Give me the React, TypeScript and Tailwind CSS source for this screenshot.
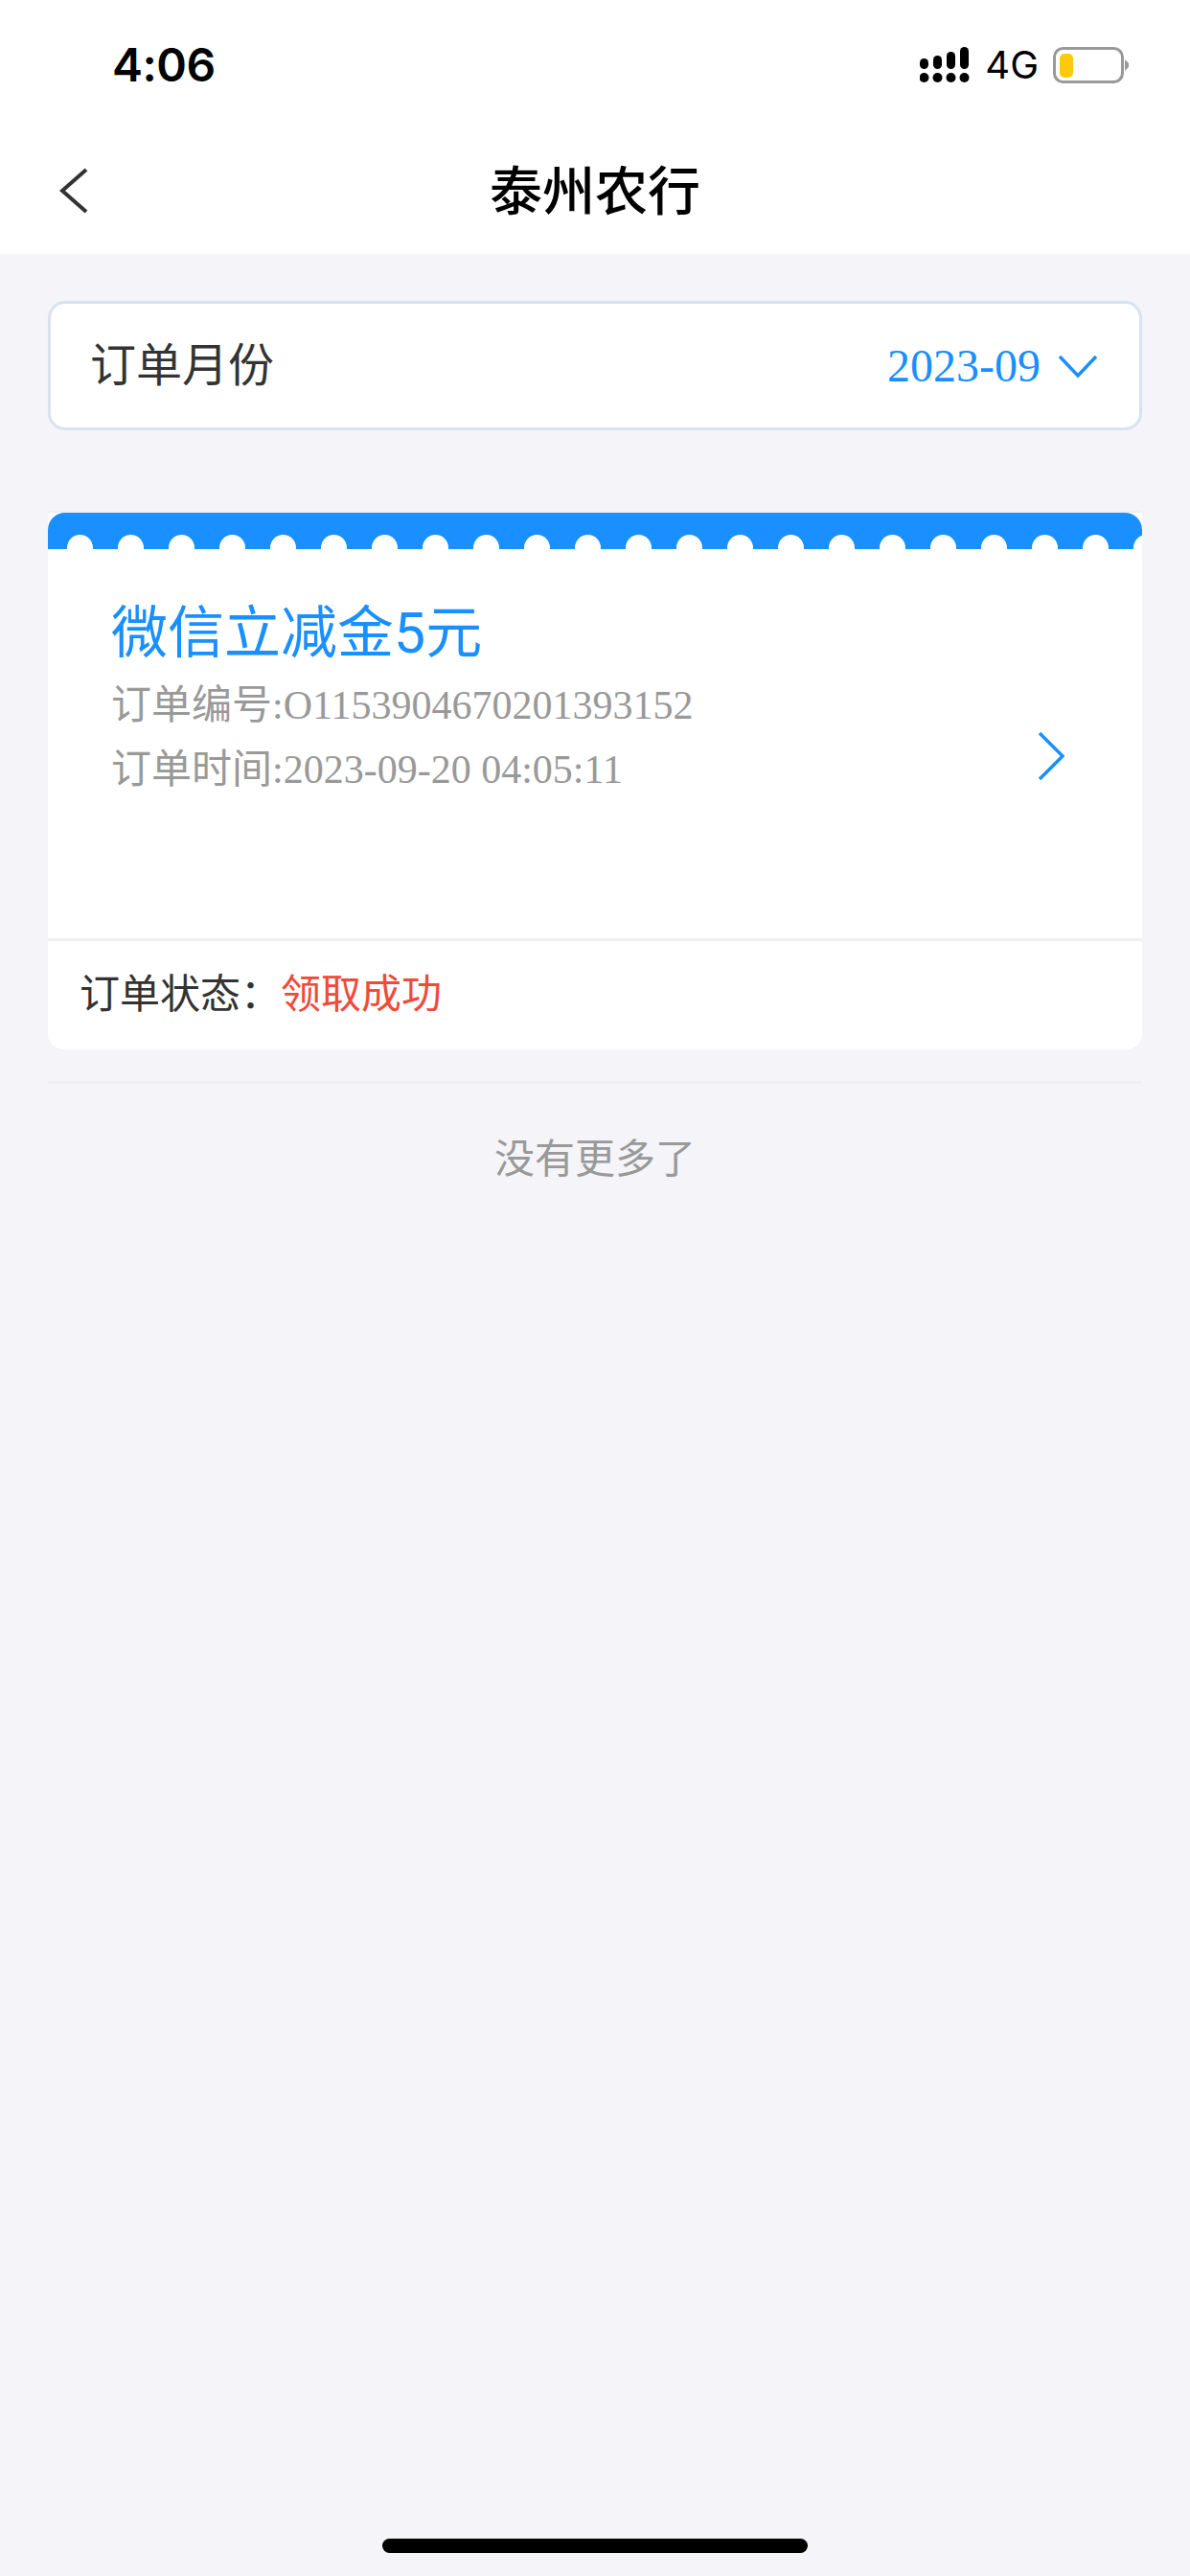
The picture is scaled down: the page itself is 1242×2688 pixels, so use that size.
import React from 'react';

const cjk = "font-['Noto_Sans_CJK_SC',sans-serif]";
const serifCjk = "font-['Liberation_Serif','Noto_Sans_CJK_SC',serif]";

const dots = Array.from({ length: 22 }, (_, i) => i);

const SignalIcon = () => (
  <svg width="52" height="38" viewBox="0 0 52 38" className="block">
    <rect x="0" y="12" width="9" height="11" rx="4.5" fill="#000" />
    <rect x="14" y="9" width="9" height="14" rx="4.5" fill="#000" />
    <rect x="28" y="5" width="9" height="18" rx="4.5" fill="#000" />
    <rect x="42" y="0" width="9" height="23" rx="4.5" fill="#000" />
    <circle cx="4.5" cy="32" r="5" fill="#000" />
    <circle cx="18.5" cy="32" r="5" fill="#000" />
    <circle cx="32.5" cy="32" r="5" fill="#000" />
    <circle cx="46.5" cy="32" r="5" fill="#000" />
  </svg>
);

const BatteryIcon = () => (
  <svg width="80" height="38" viewBox="0 0 80 38" className="block">
    <rect x="1.5" y="1.5" width="71" height="35" rx="9" fill="#fff" stroke="#999" strokeWidth="3" />
    <rect x="7" y="7" width="14" height="25" rx="5" fill="#fdc90a" />
    <path d="M75 13 L79 17 V21 L75 25 Z" fill="#999" />
  </svg>
);

const StatusBar = () => (
  <div className="flex h-[133px] items-start justify-between pl-[117px] pr-[63px] pt-[49px]">
    <span className="font-['Inter',sans-serif] text-[48px] leading-[38px] font-semibold tracking-[-0.5px] text-black">4:06</span>
    <div className="flex items-center">
      <SignalIcon />
      <span className="ml-[16px] mr-[15px] font-['Inter',sans-serif] text-[40px] leading-[38px] text-black">4G</span>
      <BatteryIcon />
    </div>
  </div>
);

const NavBar = () => (
  <div className="relative flex h-[132px] items-start justify-center">
    <svg width="30" height="48" viewBox="0 0 30 48" fill="none" className="absolute left-[62px] top-[42px]">
      <path d="M28 2 L3 24 L28 46" stroke="#333" strokeWidth="4" />
    </svg>
    <span className={`${cjk} text-[55px] leading-[124px] font-medium text-black`}>泰州农行</span>
  </div>
);

const MonthPicker = () => (
  <div className="mx-[50px] mt-[49px] flex h-[135px] items-center justify-between rounded-[18px] border-[3px] border-[#d9e3f0] bg-white pl-[41px] pr-[43px]">
    <span className={`${cjk} mb-[10px] text-[48px] leading-[60px] text-[#333]`}>订单月份</span>
    <div className="flex items-center">
      <span className={`${serifCjk} text-[48px] leading-[60px] text-[#1a8fff]`}>2023-09</span>
      <svg width="42" height="26" viewBox="0 0 42 26" fill="none" className="ml-[18px]">
        <path d="M2 3 L21 23 L40 3" stroke="#1a8fff" strokeWidth="3.5" />
      </svg>
    </div>
  </div>
);

const OrderCard = () => (
  <div className="mx-[50px] mt-[84px] overflow-hidden rounded-b-[16px] border-t-[2px] border-[#eef0f4] bg-white">
    <div className="flex h-[38px] items-end gap-[26px] overflow-hidden rounded-t-[18px] bg-[#1a8fff] pl-[20px]">
      {dots.map((i) => (
        <div key={i} className="h-[15px] w-[27px] shrink-0 rounded-t-[14px] bg-white" />
      ))}
    </div>
    <div className="flex h-[409px] items-start justify-between border-b-[3px] border-[#eeeff2] pl-[66px] pr-[81px]">
      <div className="pt-[48px]">
        <div className="font-['Roboto','Noto_Sans_CJK_SC',sans-serif] text-[59px] leading-[80px] text-[#1a8fff]">
          微信立减金5元
        </div>
        <div className={`${serifCjk} mt-[2px] text-[42px] leading-[67px] text-[#999]`}>订单编号:O1153904670201393152</div>
        <div className={`${serifCjk} text-[42px] leading-[67px] text-[#999]`}>订单时间:2023-09-20 04:05:11</div>
      </div>
      <svg width="28" height="50" viewBox="0 0 28 50" fill="none" className="mt-[191px]">
        <path d="M2 1 L26 25 L2 49" stroke="#1a8fff" strokeWidth="3.5" />
      </svg>
    </div>
    <div className={`${cjk} flex h-[113px] items-center pb-[9px] pl-[33px] text-[42px] leading-[56px] text-[#333]`}>
      订单状态：<span className="text-[#f04a3a]">领取成功</span>
    </div>
  </div>
);

const App: React.FC = () => {
  return (
    <div className="relative min-h-[2688px] w-[1242px] bg-[#f4f4f9]">
      <div className="bg-white">
        <StatusBar />
        <NavBar />
      </div>
      <MonthPicker />
      <OrderCard />
      <div className="mx-[50px] mt-[33px] h-[3px] bg-[#eeeff3]" />
      <div className={`${cjk} mt-[47px] text-center text-[42px] leading-[56px] text-[#999]`}>没有更多了</div>
      {/* home indicator */}
      <div className="absolute bottom-[24px] left-[399px] h-[15px] w-[444px] rounded-full bg-black" />
    </div>
  );
};

export default App;
